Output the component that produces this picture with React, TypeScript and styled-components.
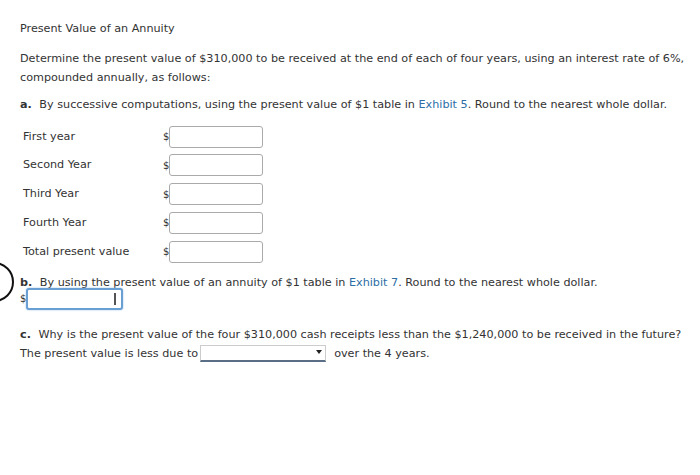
import React from "react";
import styled, { createGlobalStyle } from "styled-components";

const Global = createGlobalStyle`
  html, body { margin: 0; padding: 0; background: #fff; }
  body { font-family: "DejaVu Sans", Verdana, sans-serif; font-size: 11.2px; color: #333; }
`;

const Page = styled.div`
  position: relative;
  width: 700px;
  height: 475px;
  overflow: hidden;
  padding: 19px 0 0 20px;
  box-sizing: border-box;
`;

const Title = styled.div`
  line-height: 19px;
  margin-bottom: 11px;
`;

const Para = styled.p`
  margin: 0;
  line-height: 19px;
  width: 678px;
`;

const Part = styled.div<{ $top: number }>`
  margin-top: ${(p) => p.$top}px;
  line-height: 19px;
`;

const Letter = styled.b`
  font-weight: bold;
  margin-right: 4px;
`;

const Link = styled.span`
  color: #2d6ea6;
`;

const Rows = styled.div`
  display: grid;
  grid-template-columns: 140px auto;
  row-gap: 6.75px;
  margin-top: 11.5px;
  padding-left: 3px;
  align-items: center;
`;

const RowLabel = styled.div`
  line-height: 22px;
`;

const Field = styled.div`
  display: flex;
  align-items: center;
`;

const Dollar = styled.span`
  font-size: 10px;
  width: 6px;
  color: #333;
`;

const Box = styled.div`
  width: 92px;
  height: 20px;
  border: 1px solid #aaa;
  border-radius: 3px;
  background: #fff;
`;

const FocusBox = styled.div`
  position: relative;
  width: 93px;
  height: 18px;
  border: 2px solid #6a9fd4;
  border-radius: 3px;
  box-shadow: 0 0 2px #9cc3ea;
  background: #fff;
`;

const Caret = styled.span`
  position: absolute;
  right: 5px;
  top: 3px;
  width: 2px;
  height: 12px;
  background: #555;
`;

const BField = styled(Field)`
  margin-top: -4px;
`;

const Circle = styled.div`
  position: absolute;
  left: -26px;
  top: 262px;
  width: 36px;
  height: 36px;
  border: 2px solid #111;
  border-radius: 50%;
`;

const Line = styled.div`
  line-height: 19px;
  display: flex;
  align-items: center;
`;

const Select = styled.div`
  position: relative;
  width: 124px;
  height: 14px;
  margin: 0 8px 0 2px;
  border: 1px solid #ccc;
  border-bottom: 2px solid #5a6f86;
  background: #fff;
`;

const Arrow = styled.span`
  position: absolute;
  right: 3px;
  top: 4px;
  width: 0;
  height: 0;
  border-left: 3.5px solid transparent;
  border-right: 3.5px solid transparent;
  border-top: 4px solid #222;
`;

const rows = ["First year", "Second Year", "Third Year", "Fourth Year", "Total present value"];

export default function App() {
  return (
    <>
      <Global />
      <Page>
        <Title>Present Value of an Annuity</Title>
        <Para>
          Determine the present value of $310,000 to be received at the end of each of four years, using an interest
          rate of 6%, compounded annually, as follows:
        </Para>
        <Part $top={8}>
          <Letter>a.</Letter> By successive computations, using the present value of $1 table in <Link>Exhibit 5</Link>.
          Round to the nearest whole dollar.
        </Part>
        <Rows>
          {rows.map((r) => (
            <React.Fragment key={r}>
              <RowLabel>{r}</RowLabel>
              <Field>
                <Dollar>$</Dollar>
                <Box />
              </Field>
            </React.Fragment>
          ))}
        </Rows>
        <Circle />
        <Part $top={10}>
          <Letter>b.</Letter> By using the present value of an annuity of $1 table in <Link>Exhibit 7</Link>. Round to the
          nearest whole dollar.
        </Part>
        <BField>
          <Dollar>$</Dollar>
          <FocusBox>
            <Caret />
          </FocusBox>
        </BField>
        <Part $top={15}>
          <Letter>c.</Letter> Why is the present value of the four $310,000 cash receipts less than the $1,240,000 to be
          received in the future?
        </Part>
        <Line>
          The present value is less due to
          <Select>
            <Arrow />
          </Select>
          over the 4 years.
        </Line>
      </Page>
    </>
  );
}
